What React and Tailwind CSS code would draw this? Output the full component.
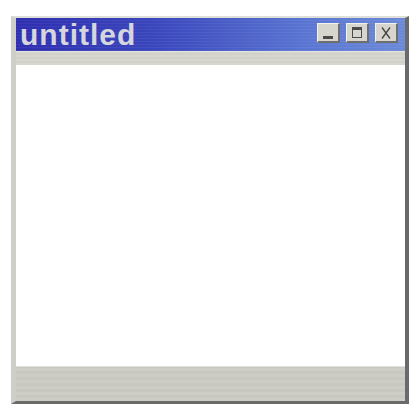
export default function App() {
  return (
    <div className="w-[420px] h-[420px] bg-white pt-[16px] pl-[11px]">
      <div className="w-[398px] h-[388px] flex flex-col border-l-[5px] border-l-[#cfcfc8] border-t-[2px] border-t-[#dedfd8] border-r-[4px] border-r-[#6a6a6a] border-b-[3px] border-b-[#6a6a6a]">
        <div className="h-[33px] flex items-start justify-between bg-[repeating-linear-gradient(0deg,rgba(255,255,255,0.05)_0px,rgba(255,255,255,0.05)_1px,transparent_1px,transparent_3px),linear-gradient(90deg,#2f2fb0_0%,#3a46bc_35%,#5a76d2_75%,#6c8ad8_100%)]">
          <div
            className="h-[33px] flex items-center pl-[4px] text-[30px] leading-[30px] font-bold tracking-[1px] text-[#d6d6de]"
            style={{ fontFamily: '"Liberation Sans", Arial, sans-serif' }}
          >
            untitled
          </div>
          <div className="flex gap-[6px] mt-[5px] mr-[7px]">
            <div className="w-[23px] h-[20px] bg-[#d6d6ce] border-t border-l border-t-[#f2f2ee] border-l-[#f2f2ee] border-b-2 border-r-2 border-b-[#6e6e6e] border-r-[#6e6e6e] flex items-end justify-center pb-[2px]">
              <div className="w-[10px] h-[3px] bg-[#4a4a4a]" />
            </div>
            <div className="w-[23px] h-[20px] bg-[#d6d6ce] border-t border-l border-t-[#f2f2ee] border-l-[#f2f2ee] border-b-2 border-r-2 border-b-[#6e6e6e] border-r-[#6e6e6e] flex items-center justify-center">
              <div className="w-[10px] h-[11px] border border-[#4a4a4a] border-t-[3px]" />
            </div>
            <div className="w-[23px] h-[20px] bg-[#d6d6ce] border-t border-l border-t-[#f2f2ee] border-l-[#f2f2ee] border-b-2 border-r-2 border-b-[#6e6e6e] border-r-[#6e6e6e] flex items-center justify-center">
              <svg width="10" height="12" viewBox="0 0 10 12">
                <path d="M1 0.5 L9 11.5 M9 0.5 L1 11.5" stroke="#444" strokeWidth="1.3" fill="none" />
              </svg>
            </div>
          </div>
        </div>
        <div className="h-[14px] bg-[repeating-linear-gradient(0deg,#d7d7cf_0px,#d7d7cf_2px,#d2d2ca_2px,#d2d2ca_4px)] border-t border-t-[#e4e4de]" />
        <div className="flex-1 bg-white" />
        <div className="h-[35px] bg-[repeating-linear-gradient(0deg,#cdcdc5_0px,#cdcdc5_3px,#c8c8c0_3px,#c8c8c0_6px)] border-t border-t-[#e2e2dc]" />
      </div>
    </div>
  );
}
